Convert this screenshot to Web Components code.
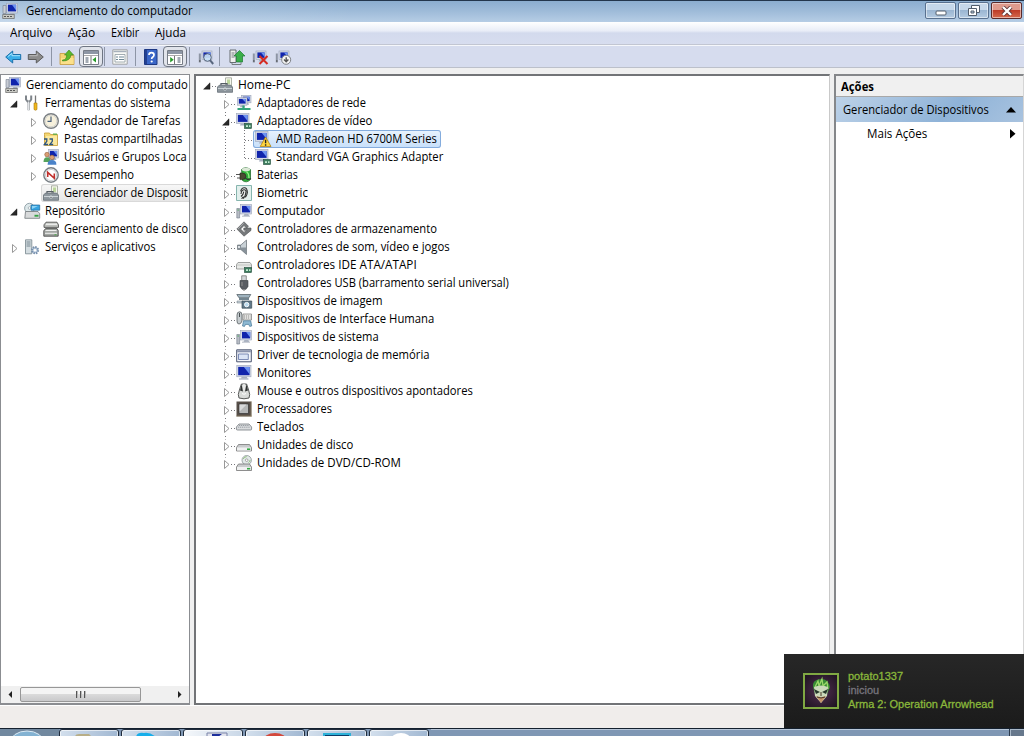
<!DOCTYPE html>
<html lang="pt-BR">
<head>
<meta charset="utf-8">
<title>Gerenciamento do computador</title>
<style>
    html, body { margin: 0; height: 100%; overflow: hidden; }
    body { font: 12px/18px "Open Sans", "Noto Sans", sans-serif; color: #000; }
</style>
</head>
<body>
<mmc-desktop></mmc-desktop>

<script>
// Monitor shared by most of the device icons
const screen = (x, y, w, h) => `
    <rect x="${x}" y="${y}" width="${w}" height="${h}" fill="#d5dae6" stroke="#9aa4b8" stroke-width=".6"/>
    <rect x="${x + 1.4}" y="${y + 1.4}" width="${w - 2.8}" height="${h - 3}" fill="#1024ac"/>
    <path d="M${x + w * .5} ${y + 1.4}H${x + w - 1.4}V${y + h - 2.6}z" fill="#6c92f0"/>
    <path d="M${x + w * .35} ${y + h}h${w * .35}l1 2h-${w * .35 + 2}z" fill="#a9b1c1"/>`;
const card = `<rect x="8.5" y="10.5" width="7" height="5" fill="#3d7c5e" stroke="#1f4a38" stroke-width=".6"/><path d="M10 12.3h2v1.7h-2zM13 12.3h1.5v1.7H13z" fill="#c5ecd3"/>`;
const drive = y => `<path d="M2.5 ${y}h11l2 3v3.5H.5V${y + 3}z" fill="#c9cbcd" stroke="#777" stroke-width=".8"/><path d="M1 ${y + 3}h14v3H1z" fill="#f0f1f1"/><path d="M11 ${y + 3.9}h3.2v1.6H11z" fill="#35a845"/>`;
const toolbox = `<path d="M8.5.8h6v9h-6z" fill="#f5f7ed" stroke="#8f978a" stroke-width=".7"/><path d="M10 2.5h3v4.5h-3z" fill="#bad59b"/><path d="M4 8.5V6.5h6v2" fill="none" stroke="#555d64" stroke-width="1.2"/><path d="M.5 10l2-2h11l2 2v5.3H.5z" fill="#8e979e" stroke="#59636b" stroke-width=".7"/><path d="M1 11.5h14M7 11h2v2H7z" stroke="#dbe1e5" stroke-width=".8"/>`;
const tower = `<path d="M.8 5.5h2.8V15H.8z" fill="#b7bcc4" stroke="#717a89" stroke-width=".6"/><path d="M1.5 7h1.4" stroke="#4a5"/>`;
const scan = `<path d="M.8 4.5h2v9h-2z" fill="#8d95a4"/><path d="M1 12h1.6" stroke="#444"/>` + screen(4, 2, 10, 8.5);
const pane = (arrow) => `<path d="M.5 1.5h15v14H.5z" fill="#fff" stroke="#777d87"/><path d="M1 2h14v3H1z" fill="#8e97a5"/><path d="M1 6.5h14" stroke="#aaa"/><path d="M${arrow < 0 ? 8 : 7.5} 7v8" stroke="#777"/>` +
    (arrow < 0 ? `<path d="M2.5 9h3M2.5 11h3M2.5 13h3" stroke="#456"/><path d="M13 8v5.5L9.5 10.8z" fill="#269b28"/>`
               : `<path d="M10.5 9h3M10.5 11h3M10.5 13h3" stroke="#456"/><path d="M3.2 8v5.5l3.5-2.7z" fill="#269b28"/>`);

const ICONS = {
    computer: screen(4.5, .3, 11, 9.7) + `<path d="M1 2.5h3v8H1z" fill="#c8ccd4" stroke="#747d8d" stroke-width=".6"/><path d="M.7 11.5h11.6v4H.7z" fill="#c9cac4" stroke="#666" stroke-width=".7"/><path d="M2 13.5h2m1 0h2m1 0h2" stroke="#555"/>`,
    tools: `<path d="M2 .5v4l1.6 2h2l1.6-2v-4M4.6 6.5v8.7" fill="none" stroke="#7e848a" stroke-width="2"/><path d="M4.6 6.5V15" stroke="#eef0f2"/><path d="M11.5.5V9" stroke="#777" stroke-width="1.3"/><path d="M10 8h3v6.5q-1.5 1.4-3 0z" fill="#f0b71e" stroke="#a8790c" stroke-width=".6"/>`,
    clock: `<circle cx="8" cy="8" r="7.3" fill="#f7f1dc" stroke="#7b8085" stroke-width="1.4"/><circle cx="8" cy="8" r="5.8" fill="none" stroke="#c8ccce" stroke-width=".7"/><path d="M8 3.5V8.3H4.5" fill="none" stroke="#4a627c" stroke-width="1.2"/>`,
    shared: `<path d="M1.5 3.5V2h5l1 1.5h7v11h-13z" fill="#f4d773" stroke="#c69b34" stroke-width=".8"/><path d="M3 5h11v9H3z" fill="#fbe9a0"/><path d="M10 3.2h4" stroke="#69ad49" stroke-width="1.4"/><path d="M1 8h2.8v2.3L1.3 13.5H5M6.5 8h2.8v2.3l-2.5 3.2h3.4" fill="none" stroke="#2d5580" stroke-width="1.3"/>`,
    users: screen(5.5, .5, 10, 8.5) + `<circle cx="4" cy="5.6" r="2.3" fill="#d99d73" stroke="#87502e" stroke-width=".5"/><path d="M.5 13q0-4.8 3.5-4.8T8 13z" fill="#55a35c"/><circle cx="9" cy="8.4" r="2.4" fill="#d9a077" stroke="#6d412a" stroke-width=".5"/><path d="M4.6 15.7q0-4.6 4.4-4.6t4.4 4.6z" fill="#4b83c9"/>`,
    perf: `<circle cx="8" cy="8" r="7.2" fill="#fff" stroke="#777e84" stroke-width="1.4"/><circle cx="8" cy="8" r="5.6" fill="none" stroke="#ccd0d3"/><path d="M4.7 10V5.3l6.6 6V6.5" fill="none" stroke="#c02f2c" stroke-width="1.6"/>`,
    toolbox,
    storage: `<circle cx="5.5" cy="5.2" r="4.9" fill="#dde8ea" stroke="#7f9099" stroke-width=".8"/><circle cx="5.5" cy="5" r="1.3" fill="#fff" stroke="#88969e" stroke-width=".6"/><path d="M7 2h8.7v5.2H7z" fill="#36a3e0" stroke="#266b9c" stroke-width=".7"/><path d="M8 3h6L8 6z" fill="#8fd4f5"/><path d="M1.5 8.5h12.5l1.7 2.2v4.6H.8z" fill="#d8dadb" stroke="#70767a" stroke-width=".8"/><path d="M10.5 11.8h4v1.9h-4z" fill="#33a344"/>`,
    disks: `<path d="M3 1.2h11l1.5 2.6v2.6H1V3.8z" fill="#bcbeba" stroke="#444" stroke-width=".8"/><path d="M3 3.2h11" stroke="#fff"/><path d="M2.5 7.6H14l1.2 2v5.6H.8V9.8z" fill="#a4a8a4" stroke="#3b3b3b" stroke-width=".8"/><path d="M2.5 9.5h11M2 12.3h12" stroke="#efefef"/><path d="M11.5 13.8h2" stroke="#4a4"/>`,
    services: `<path d="M1.5.8h6.3v14H1.5z" fill="#d4dde1" stroke="#76858d" stroke-width=".8"/><path d="M2.5 3h4M2.5 5h4M2.5 7h4" stroke="#768690"/><circle cx="11" cy="11.2" r="3.1" fill="#b9cadc" stroke="#7790ad" stroke-width="2" stroke-dasharray="1.5 .9"/><circle cx="11" cy="11.2" r="1.2" fill="#fff"/>`,
    network: screen(5.5, .3, 9.5, 7.5) + screen(1.5, 2.5, 9.5, 7.7) + `<path d="M7.5 10.5v3M1.5 14h13" stroke="#35a57c" stroke-width="2.2"/>`,
    display: screen(.5, .5, 12.5, 10) + card,
    warning: screen(.5, .5, 12.5, 10) + `<path d="M10.6 6L16 15.5H5.2z" fill="#ffd640" stroke="#b38312" stroke-width=".8" stroke-linejoin="round"/><path d="M10.6 8.7v3.6m0 1v1.4" stroke="#222" stroke-width="1.4"/>`,
    battery: `<path d="M5.5 2.5q4-3.5 9 0v10q-4 4-8 1z" fill="#2fae38" stroke="#2a6c33" stroke-width=".8"/><ellipse cx="10" cy="2.6" rx="4.2" ry="1.8" fill="#dce8d7"/><path d="M10.5 5q2.5 1 2.5 6" stroke="#9cf08a" stroke-width="1.3" fill="none"/><path d="M0 7.5h4M1 11h4" stroke="#555" stroke-width="1.2"/><path d="M4 6h2q4 0 4 3.3t-4 3.3H4z" fill="#4a4b32" stroke="#23241a" stroke-width=".6"/><path d="M9 10q2 4 6 1.5" fill="none" stroke="#333" stroke-width="1.2"/>`,
    biometric: `<path d="M.5.5h15v15H.5z" fill="#e2efec" stroke="#86b5ae"/><path d="M4.3 7Q4.5 2.6 8.3 2.6T12 6.5 10.6 12 7 14.4 5 13.4 4.3 7z" fill="#f3f4f3"/><g fill="none" stroke="#2b2f2e" stroke-width="1.1"><path d="M4.6 6.3Q5.6 2.7 8.4 2.8t3 4.6q-.4 3-2 5M5 9q.5-4.2 3.1-4.2T9.8 8q-.4 3-2.4 5.6M5 11.5Q7.4 9.5 7.8 6.6M5.5 13.6q1.2-.8 2-2"/></g>`,
    pc: tower + screen(4.6, 1.5, 11, 9.5) + `<path d="M6 13.2h8" stroke="#b4bac5"/>`,
    controller: `<path d="M8 .8L12.5 5.3 10.6 7.2 8 4.6 4.6 8 8 11.4l2.2-2.2H7.8V7H15v2.4L8 15.2.8 8z" fill="#76797b" stroke="#505456" stroke-width=".6"/><path d="M8 1.8L2 8" stroke="#b5b8ba" stroke-width=".8"/>`,
    sound: `<path d="M1.5 6h3.3L10.5 1v14.5L4.8 10.5H1.5z" fill="#88929a" stroke="#5f686f" stroke-width=".6"/><path d="M5 6.3L10 2v6.5H5z" fill="#c9d1d6"/><path d="M2 7h2v2H2z" fill="#dde1e4"/>`,
    ide: `<path d="M2 5.5h12l1.5 2v4.5H.5V7.5z" fill="#e8e9e7" stroke="#8a8d8c" stroke-width=".8"/><path d="M1 8h14" stroke="#b9bbb9" stroke-width=".8"/>` + card,
    usb: `<path d="M5.7.8h4.6v5H5.7z" fill="#d3d6d8" stroke="#777" stroke-width=".8"/><path d="M4 5.5h8v6l-2 2.8H6L4 11.5z" fill="#5a5e63" stroke="#3e4347" stroke-width=".6"/><path d="M8 14v2M6 7v4" stroke="#888" stroke-width="1.2"/>`,
    imaging: `<path d="M.8 1.5h14l-2 3.3H3z" fill="#9fb3bf" stroke="#4a565d" stroke-width=".7"/><path d="M3 5h10v2H3z" fill="#738590"/><path d="M1 8h6v2H1z" fill="#c9d4da" stroke="#66737b" stroke-width=".5"/><path d="M6 8h9.7v7.2H6z" fill="#61798a" stroke="#3a4a55" stroke-width=".7"/><circle cx="10.7" cy="11.6" r="2.2" fill="#bcdcf0" stroke="#fff" stroke-width=".9"/>`,
    hid: `<path d="M1 4q0-3.2 2.5-3.2T6 4v6q-1 3-3 3t-2-3z" fill="#c6cccf" stroke="#555d61" stroke-width=".8"/><path d="M3.5 2v4" stroke="#4a5053"/><path d="M7 3h8.5v6H7z" fill="#ecece9" stroke="#777" stroke-width=".7"/><path d="M8 5h6.5M8 7h6.5" stroke="#888" stroke-dasharray="1.2 .8"/><path d="M6.5 15l1-5.2h7.2l1 5.2-2 .4-1-2H9.5l-1 2z" fill="#8eb9d3" stroke="#457797" stroke-width=".7"/>`,
    pcMemory: "",
    memory: `<path d="M.7 2.8h14.6v12H.7z" fill="#f4f6fa" stroke="#4b556f"/><path d="M1.2 3.3h13.6v2H1.2z" fill="#8a93ad"/><path d="M2.5 7h9.8v5.5H2.5z" fill="#dbe4f5" stroke="#6f80ae" stroke-width=".9"/>`,
    monitor: screen(.8, .5, 14.2, 11.3) + `<path d="M3 14h9.5" stroke="#b3bccb" stroke-width="1.4"/>`,
    mouse: `<path d="M3 15q-1.6-3 .4-8l2-6h5.2l2 6q2 5 .4 8-5 1.6-10 0z" fill="#d9dbd9" stroke="#484b4a" stroke-width=".9"/><path d="M5.6 1.2L4 7.5l3 1zM10.4 1.2L12 7.5l-3 1z" fill="#2f3232"/><path d="M7.2 1h1.6v6H7.2z" fill="#eee"/><path d="M6 10.5q2 1.5 4 0" fill="none" stroke="#fff"/>`,
    cpu: `<path d="M.5.5h15v15H.5z" fill="#574f49"/><path d="M15 .5v15M.5 15H16" stroke="#a4936b" stroke-dasharray="1 1"/><path d="M3 3h9.5v9.5H3z" fill="#b5b7b8" stroke="#333" stroke-width=".7"/><path d="M3.6 3.6h7l-7 7z" fill="#d9dadb"/>`,
    keyboard: `<path d="M3 5h10l2.6 3v2q0 1-1 1H1.4q-1 0-1-1V8z" fill="#dadcde" stroke="#777c82" stroke-width=".8"/><path d="M3 6.5h10M2 8.2h12" stroke="#999fa4" stroke-dasharray="1.2 .7"/>`,
    disk: drive(7.5),
    dvd: `<circle cx="10.7" cy="5.2" r="4.7" fill="#e2e9e8" stroke="#8b9697" stroke-width=".8"/><circle cx="10.7" cy="5.2" r="1.3" fill="#fff" stroke="#777" stroke-width=".6"/><path d="M7.2 4q1.2-2.2 3.5-2.4M12.5 7.5q1.4-.8 1.6-2.4" stroke="#8fc07a" fill="none"/>` + drive(9),
    back: `<path d="M.7 8l7-6v3.5h8v5h-8V14z" fill="#3caee8" stroke="#1b6faa"/><path d="M3 7.5l4-3.2v2.4h8" stroke="#a5e2fb" fill="none"/>`,
    forward: `<path d="M15.3 8l-7-6v3.5h-8v5h8V14z" fill="#8c8c8c" stroke="#5c5c5c"/><path d="M1.5 6.7h7.7V4.3" stroke="#bbb" fill="none"/>`,
    up: `<path d="M1 4.5h5l1.5 1.7H15v9.3H1z" fill="#f4d475" stroke="#c59a3d" stroke-width=".8"/><path d="M2 9h12.6v6H2z" fill="#fbe08a"/><path d="M3.5 11q4 0 4.3-5H5.5L10 1l4.5 5h-2.6q-.5 6-8.4 6z" fill="#5cb82c" stroke="#37821c" stroke-width=".6"/>`,
    paneLeft: pane(-1),
    paneRight: pane(1),
    props: `<path d="M.8.8h14.4v14.4H.8z" fill="#f7f8f5" stroke="#a0a3a6"/><path d="M1.5 2.5h13" stroke="#a7b0bb" stroke-width="1.4"/><path d="M3 5.5h10v7.5H3z" fill="#fff" stroke="#8d99a0" stroke-width=".8"/><path d="M4 8h2m1 0h5M4 10.5h2m1 0h5" stroke="#6c8795"/>`,
    help: `<path d="M1.5.5H14v15H1.5z" fill="#3a66c8" stroke="#1d3883"/><path d="M2 1h2v14H2z" fill="#234092"/><path d="M6 6q0-2.4 2.5-2.4T11 6q0 1.2-1.4 2.2-.9.7-.9 1.9" fill="none" stroke="#fff" stroke-width="1.7"/><circle cx="8.7" cy="12.5" r="1.1" fill="#fff"/>`,
    scan: scan + `<circle cx="9.5" cy="8.5" r="3.8" fill="#c8dff5" fill-opacity=".92" stroke="#59677e"/><path d="M12 11.2l3.2 3.8" stroke="#59677e" stroke-width="2"/>`,
    update: `<path d="M1 1h6v12.5H1z" fill="#eeefec" stroke="#666d70"/><path d="M2.5 4h3m-3 2h3m-3 2h3" stroke="#777e80"/><path d="M3 13.5v2h9v-2" fill="none" stroke="#777e80"/><path d="M7.5 13V7H5l5.5-5.5L16 7h-2.5v6z" fill="#3bae49" stroke="#1b7830" stroke-width=".7"/>`,
    uninstall: scan + `<path d="M7.5 7l8 8M15.5 7l-8 8" stroke="#d52b22" stroke-width="2"/>`,
    disable: scan + `<circle cx="11.2" cy="10.8" r="4.5" fill="#f4f4f4" stroke="#7e8287"/><path d="M11.2 8.3v4m-2.2-1.7l2.2 2.2 2.2-2.2" fill="none" stroke="#555" stroke-width="1.4"/>`
};

function define(name, html, setup) {
    const template = document.createElement("template");
    template.innerHTML = html;
    customElements.define(name, class extends HTMLElement {
        constructor() {
            super();
            this.attachShadow({ mode: "open" }).appendChild(template.content.cloneNode(true));
        }
        connectedCallback() {
            if (setup) setup(this, this.shadowRoot);
        }
    });
}

define("mmc-icon", `
    <style>
        :host { display: block; flex: none; width: 16px; height: 16px; }
        svg { display: block; width: 100%; height: 100%; overflow: visible; }
    </style>
    <svg viewBox="0 0 16 16"></svg>`, (el, root) => {
    root.querySelector("svg").innerHTML = ICONS[el.getAttribute("name")];
});

// Text condensed to a given width, so the labels keep the metrics of the system font
define("mmc-text", `
    <style>
        :host { display: block; flex: none; white-space: nowrap; }
        span { display: inline-block; transform-origin: 0 50%; }
    </style>
    <span><slot></slot></span>`, (el, root) => {
    const span = root.querySelector("span");
    const w = Number(el.getAttribute("w"));
    el.style.width = w + "px";
    span.style.transform = `scaleX(${w / span.offsetWidth})`;
});

define("mmc-titlebar", `
    <style>
        :host { display: flex; align-items: center; height: 22px; box-sizing: border-box; padding: 0 2px; border-top: 1px solid #23364c;
            background: linear-gradient(90deg, rgba(255,255,255,.22), rgba(255,255,255,0) 35%), linear-gradient(#8badcf, #9dbad8 45%, #b6cde5); }
        mmc-icon { margin-bottom: 2px; }
        mmc-text { margin-left: 8px; flex: 1; padding-bottom: 1px; }
        .btn { display: flex; align-items: center; justify-content: center; box-sizing: border-box; width: 31px; height: 17px; margin: 0 0 2px 2px;
            border: 1px solid #59718f; border-radius: 2px; box-shadow: inset 0 0 0 1px rgba(255,255,255,.5);
            background: linear-gradient(#c6d8ea 45%, #9bb6d2 50%, #b5cbe1); }
        .close { border-color: #5b2a2a; background: linear-gradient(#df9a8c 45%, #be3c28 50%, #d5694d); }
    </style>
    <mmc-icon name="computer"></mmc-icon>
    <mmc-text w="167">Gerenciamento do computador</mmc-text>
    <div class="btn"><svg width="12" height="10"><rect x="1" y="5" width="10" height="4" rx="1" fill="#fff" stroke="#535e6c"/></svg></div>
    <div class="btn"><svg width="12" height="12"><path d="M3.5.5h8v7h-8z" fill="#fff" stroke="#535e6c"/><path d="M.5 3.5h8v7h-8z" fill="#fff" stroke="#535e6c"/><path d="M3 6h3v2H3z" fill="#b9cce0" stroke="#535e6c"/></svg></div>
    <div class="btn close"><svg width="12" height="10"><path d="M2 1l8 8M10 1L2 9" stroke="#5d3436" stroke-width="4"/><path d="M2 1l8 8M10 1L2 9" stroke="#fff" stroke-width="2.4"/></svg></div>`);

define("mmc-menubar", `
    <style>
        :host { display: flex; align-items: center; gap: 16px; height: 22px; padding-left: 10px;
            background: linear-gradient(#fff, #e9edf7 40%, #d3daed 50%, #d7ddef); border-bottom: 1px solid #c2c6d2; }
    </style>
    <mmc-text w="42">Arquivo</mmc-text>
    <mmc-text w="27">Ação</mmc-text>
    <mmc-text w="28">Exibir</mmc-text>
    <mmc-text w="31">Ajuda</mmc-text>`);

define("mmc-toolbar", `
    <style>
        :host { display: flex; align-items: center; height: 21px; padding-left: 5px; background: #d6dcee; border-top: 1px solid #f5f7fb; border-bottom: 1px solid #bcc0ca; }
        i { width: 1px; height: 19px; background: #8d95a6; }
        .on { display: flex; align-items: center; justify-content: center; box-sizing: border-box; width: 24px; height: 21px;
            border: 1.5px solid #6f7683; border-radius: 4px; background: #e1e4eb; }
        .a { margin-left: 7px; }
        .b { margin-left: 4px; }
    </style>
    <mmc-icon name="back"></mmc-icon>
    <mmc-icon name="forward" class="a"></mmc-icon>
    <i class="a"></i>
    <mmc-icon name="up" class="a"></mmc-icon>
    <div class="on b"><mmc-icon name="paneLeft"></mmc-icon></div>
    <i style="margin-left:1px"></i>
    <mmc-icon name="props" class="a"></mmc-icon>
    <i class="a"></i>
    <mmc-icon name="help" class="a"></mmc-icon>
    <div class="on b"><mmc-icon name="paneRight"></mmc-icon></div>
    <i style="margin-left:2px"></i>
    <mmc-icon name="scan" class="a" style="margin-left:8px"></mmc-icon>
    <i style="margin-left:5px"></i>
    <mmc-icon name="update" style="margin-left:9px"></mmc-icon>
    <mmc-icon name="uninstall" class="a"></mmc-icon>
    <mmc-icon name="disable" class="a"></mmc-icon>`);

// cells: number of 19px indent columns; state: open, closed or none
define("tree-row", `
    <style>
        :host { display: flex; align-items: center; height: 18px; }
        .cell { flex: none; width: 19px; height: 18px; }
        .cell svg { display: block; }
        .box { display: flex; align-items: center; height: 18px; box-sizing: border-box; border-radius: 3px; padding-right: 4px; }
        mmc-text { margin-left: 5px; }
        :host([selected]) .box { background: linear-gradient(#e9f3fd, #c6dffa); box-shadow: inset 0 0 0 1px #84acdd; margin-left: -2px; padding-left: 2px; }
        :host([current]) .box { background: linear-gradient(#f8f8f8, #e5e5e5); box-shadow: inset 0 0 0 1px #d9d9d9; margin-left: -2px; padding-left: 2px; border-radius: 3px 0 0 3px; padding-right: 10px; }
    </style>
    <div class="box"><mmc-icon></mmc-icon><mmc-text><slot></slot></mmc-text></div>`, (el, root) => {
    const get = name => el.getAttribute(name);
    const cells = Number(get("cells")), state = get("state"), box = root.querySelector(".box");
    const lines = el.hasAttribute("lines"), last = el.hasAttribute("last");
    for (let i = 1; i <= cells; i++) {
        const own = i === cells;
        let art = "";
        if (lines && i > 1 && !(own && i === 3 && last)) art += `<path d="M8.5 0V18"/>`;
        if (lines && own && i === 3 && last) art += `<path d="M8.5 0V10"/>`;
        if (lines && own) art += `<path d="M${state === "none" ? 9 : 14} 10.5H19"/>`;
        art = `<g stroke="#77777b" stroke-dasharray="1 2" fill="none">${art}</g>`;
        if (own && state === "closed") art += `<path d="M5 3.5h9v13H5z" fill="#fff"/><path d="M7.5 6.5v8l4.5-4z" fill="#fff" stroke="#999"/>`;
        if (own && state === "open") art += `<path d="M5 4.5h8v10H5z" fill="#fff"/><path d="M12 6.8v6.4H5.6z" fill="#2a2a2a" stroke="#000" stroke-width=".4"/>`;
        const cell = document.createElement("div");
        cell.className = "cell";
        cell.innerHTML = `<svg width="19" height="18">${art}</svg>`;
        root.insertBefore(cell, box);
    }
    const icon = document.createElement("mmc-icon");
    icon.setAttribute("name", get("icon"));
    root.querySelector("mmc-icon").replaceWith(icon);
    const text = document.createElement("mmc-text");
    text.setAttribute("w", get("w"));
    text.textContent = el.textContent;
    root.querySelector("mmc-text").replaceWith(text);
});

const row = (cells, state, icon, w, text, extra = "") =>
    `<tree-row cells="${cells}" state="${state}" icon="${icon}" w="${w}" ${extra}>${text}</tree-row>`;

define("console-tree", `
    <style>
        :host { display: flex; flex-direction: column; box-sizing: border-box; width: 190px; border: 1px solid #8b8d91; border-width: 1px 1.5px 2px 1px; background: #fff; overflow: hidden; }
        .rows { flex: 1; padding: 1px 0 0 4px; overflow: hidden; }
        .scroll { display: flex; align-items: center; height: 17px; background: #f0f0f0; }
        .arrow { flex: none; width: 19px; text-align: center; line-height: 0; }
        .thumb { display: flex; align-items: center; justify-content: center; gap: 2px; box-sizing: border-box; width: 121px; height: 15px; border: 1px solid #979797; border-radius: 2px; background: linear-gradient(#f4f4f4 45%, #dadada 50%, #c9c9cb); }
        .thumb b { width: 1px; height: 7px; background: #555; border-right: 1px solid #bbb; }
        .end { margin-left: auto; }
    </style>
    <div class="rows">
        ${row(0, "none", "computer", 162, "Gerenciamento do computado")}
        ${row(1, "open", "tools", 125, "Ferramentas do sistema")}
        ${row(2, "closed", "clock", 116, "Agendador de Tarefas")}
        ${row(2, "closed", "shared", 118, "Pastas compartilhadas")}
        ${row(2, "closed", "users", 123, "Usuários e Grupos Loca")}
        ${row(2, "closed", "perf", 70, "Desempenho")}
        ${row(2, "none", "toolbox", 124, "Gerenciador de Disposit", "current")}
        ${row(1, "open", "storage", 60, "Repositório")}
        ${row(2, "none", "disks", 124, "Gerenciamento de disco")}
        ${row(1, "closed", "services", 111, "Serviços e aplicativos")}
    </div>
    <div class="scroll">
        <div class="arrow"><svg width="5" height="7"><path d="M4 0v7L.5 3.5z" fill="#222"/></svg></div>
        <div class="thumb"><b></b><b></b><b></b></div>
        <div class="arrow end"><svg width="5" height="7"><path d="M1 0v7l3.5-3.5z" fill="#222"/></svg></div>
    </div>`);

define("device-tree", `
    <style>
        :host { display: block; flex: 1; box-sizing: border-box; margin-left: 4px; padding: 0 0 0 2px; background: #fff;
            border: solid #727477; border-width: 2px 1px 2px 2px; border-right-color: #c9c9c9; overflow: hidden; }
    </style>
    ${row(1, "open", "toolbox", 53, "Home-PC", "lines")}
    ${row(2, "closed", "network", 109, "Adaptadores de rede", "lines")}
    ${row(2, "open", "display", 115, "Adaptadores de vídeo", "lines")}
    ${row(3, "none", "warning", 161, "AMD Radeon HD 6700M Series", "lines selected")}
    ${row(3, "none", "display", 167, "Standard VGA Graphics Adapter", "lines last")}
    ${row(2, "closed", "battery", 41, "Baterias", "lines")}
    ${row(2, "closed", "biometric", 51, "Biometric", "lines")}
    ${row(2, "closed", "pc", 68, "Computador", "lines")}
    ${row(2, "closed", "controller", 180, "Controladores de armazenamento", "lines")}
    ${row(2, "closed", "sound", 193, "Controladores de som, vídeo e jogos", "lines")}
    ${row(2, "closed", "ide", 160, "Controladores IDE ATA/ATAPI", "lines")}
    ${row(2, "closed", "usb", 252, "Controladores USB (barramento serial universal)", "lines")}
    ${row(2, "closed", "imaging", 126, "Dispositivos de imagem", "lines")}
    ${row(2, "closed", "hid", 177, "Dispositivos de Interface Humana", "lines")}
    ${row(2, "closed", "pc", 122, "Dispositivos de sistema", "lines")}
    ${row(2, "closed", "memory", 173, "Driver de tecnologia de memória", "lines")}
    ${row(2, "closed", "monitor", 54, "Monitores", "lines")}
    ${row(2, "closed", "mouse", 216, "Mouse e outros dispositivos apontadores", "lines")}
    ${row(2, "closed", "cpu", 75, "Processadores", "lines")}
    ${row(2, "closed", "keyboard", 47, "Teclados", "lines")}
    ${row(2, "closed", "disk", 96, "Unidades de disco", "lines")}
    ${row(2, "closed", "dvd", 144, "Unidades de DVD/CD-ROM", "lines")}`);

define("actions-pane", `
    <style>
        :host { display: block; box-sizing: border-box; width: 190px; margin-left: 4px; background: #fff; border: solid #85878a; border-width: 2px 1px 2px 2px; border-right-color: #d5d5d5; }
        .head { height: 19px; padding: 2px 0 0 5px; box-sizing: border-box; height: 21px; background: #f0f0f0; border-bottom: 1px solid #a8a8a8; font-weight: 700; }
        .group, .item { display: flex; align-items: center; justify-content: space-between; }
        .group { height: 25px; padding: 0 7px; background: linear-gradient(135deg, #bdd2e8, #8fb3d8 60%, #a9c3df); }
        .item { height: 24px; padding: 0 7px 0 31px; }
    </style>
    <div class="head"><mmc-text w="33">Ações</mmc-text></div>
    <div class="group"><mmc-text w="146">Gerenciador de Dispositivos</mmc-text><svg width="10" height="6"><path d="M5 0l5 5.5H0z" fill="#000"/></svg></div>
    <div class="item"><mmc-text w="60">Mais Ações</mmc-text><svg width="6" height="10"><path d="M0 0v9.5L5.5 4.8z" fill="#000"/></svg></div>`);

define("task-bar", `
    <style>
        :host { display: flex; height: 8px; box-sizing: border-box; border-top: 1px solid #14202e; background: #7f97b4; overflow: hidden; }
        .start { flex: none; width: 59px; height: 7px; background: #71889f; }
        .task { flex: none; box-sizing: border-box; width: 60px; height: 12px; margin-right: 2px; border: 1px solid #202c3c; border-radius: 3px; background: linear-gradient(110deg, #d4e0ed, #9fb6d1); box-shadow: inset 0 0 0 1px rgba(255,255,255,.6); }
        .task.lit { background: linear-gradient(90deg, #f5f8fb, #c9d7e7); }
        .rest { flex: 1; border-top: 1px solid #b7c6d8; }
        .show { width: 14px; border-left: 1px solid #2b3a4d; background: #67788c; box-shadow: inset 1px 1px #a9b8c8; }
        svg { display: block; }
    </style>
    <div class="start"><svg width="59" height="7"><ellipse cx="27" cy="14" rx="17" ry="12" fill="#83b2d2" stroke="#dcebf5"/></svg></div>
    <div class="task"><svg width="57" height="7"><path d="M15 7q0-3 4-3h10l3 3z" fill="#b8ae87"/></svg></div>
    <div class="task"><svg width="57" height="7"><path d="M14 7q1-5 8-4 6-1 12 4z" fill="#16aeea"/></svg></div>
    <div class="task lit"><svg width="57" height="7"><path d="M23 3h20v4H23z" fill="#e2e4ee" stroke="#7a83a8"/><path d="M28 4h10l-4 3h-6z" fill="#1c2f9c"/></svg></div>
    <div class="task"><svg width="57" height="7"><ellipse cx="29" cy="11" rx="12" ry="8" fill="#d3483c"/></svg></div>
    <div class="task"><svg width="57" height="7"><path d="M15 3h28v4H15z" fill="#2cb1d8"/><path d="M17 5h24v2H17z" fill="#0c3b67"/></svg></div>
    <div class="task"><svg width="57" height="7"><ellipse cx="31" cy="10" rx="10" ry="7" fill="#fff"/></svg></div>
    <div class="rest"></div>
    <div class="show"></div>`);

define("game-toast", `
    <style>
        :host { display: flex; align-items: center; gap: 9px; box-sizing: border-box; width: 240px; height: 74px; padding-left: 19px;
            background: linear-gradient(#272727, #1b1b1b); font: 11px/14px "Liberation Sans", Arial, sans-serif; color: #8ab83b; }
        .avatar { display: block; flex: none; box-sizing: border-box; width: 36px; height: 36px; border: 2px solid #80a843; background: radial-gradient(#523052, #1d131f); }
        .lines { padding-bottom: 2px; }
        .grey { color: #77757d; }
        mmc-text { -webkit-text-stroke: .3px currentColor; }
    </style>
    <svg class="avatar" viewBox="0 0 32 32">
        <path d="M8 12q-1-7 7-8 8-1 10 8l-3 7H10z" fill="#398b35"/>
        <path d="M10 12l3-6 1 5 3-7 1 7 4-4 1 7" fill="none" stroke="#9bd768" stroke-width="1.3"/>
        <path d="M9 12q7-3 14 0l-1 9-6 7-6-7z" fill="#cbd9ba"/>
        <path d="M9 14l6 3-4 2zM23 14l-6 3 4 2z" fill="#26372a"/>
        <path d="M11 21q5 2 10 0l-5 7z" fill="#c69268"/><path d="M12 22q4 2 8 0M16 17v4" stroke="#493627" fill="none"/>
    </svg>
    <div class="lines">
        <mmc-text w="55">potato1337</mmc-text>
        <mmc-text w="31" class="grey">iniciou</mmc-text>
        <mmc-text w="146">Arma 2: Operation Arrowhead</mmc-text>
    </div>`);

define("mmc-desktop", `
    <style>
        :host { display: flex; flex-direction: column; width: 1024px; height: 736px; overflow: hidden; background: #f0f0f0; }
        .panes { display: flex; height: 631px; padding-top: 6px; box-sizing: content-box; }
        .status { flex: 1; background: #f0edeb; border-top: 1px solid #fff; }
        /* notification sits over the window corner */
        game-toast { position: absolute; left: 784px; top: 654px; }
    </style>
    <mmc-titlebar></mmc-titlebar>
    <mmc-menubar></mmc-menubar>
    <mmc-toolbar></mmc-toolbar>
    <div class="panes">
        <console-tree></console-tree>
        <device-tree></device-tree>
        <actions-pane></actions-pane>
    </div>
    <div class="status"></div>
    <task-bar></task-bar>
    <game-toast></game-toast>`);
</script>
</body>
</html>
